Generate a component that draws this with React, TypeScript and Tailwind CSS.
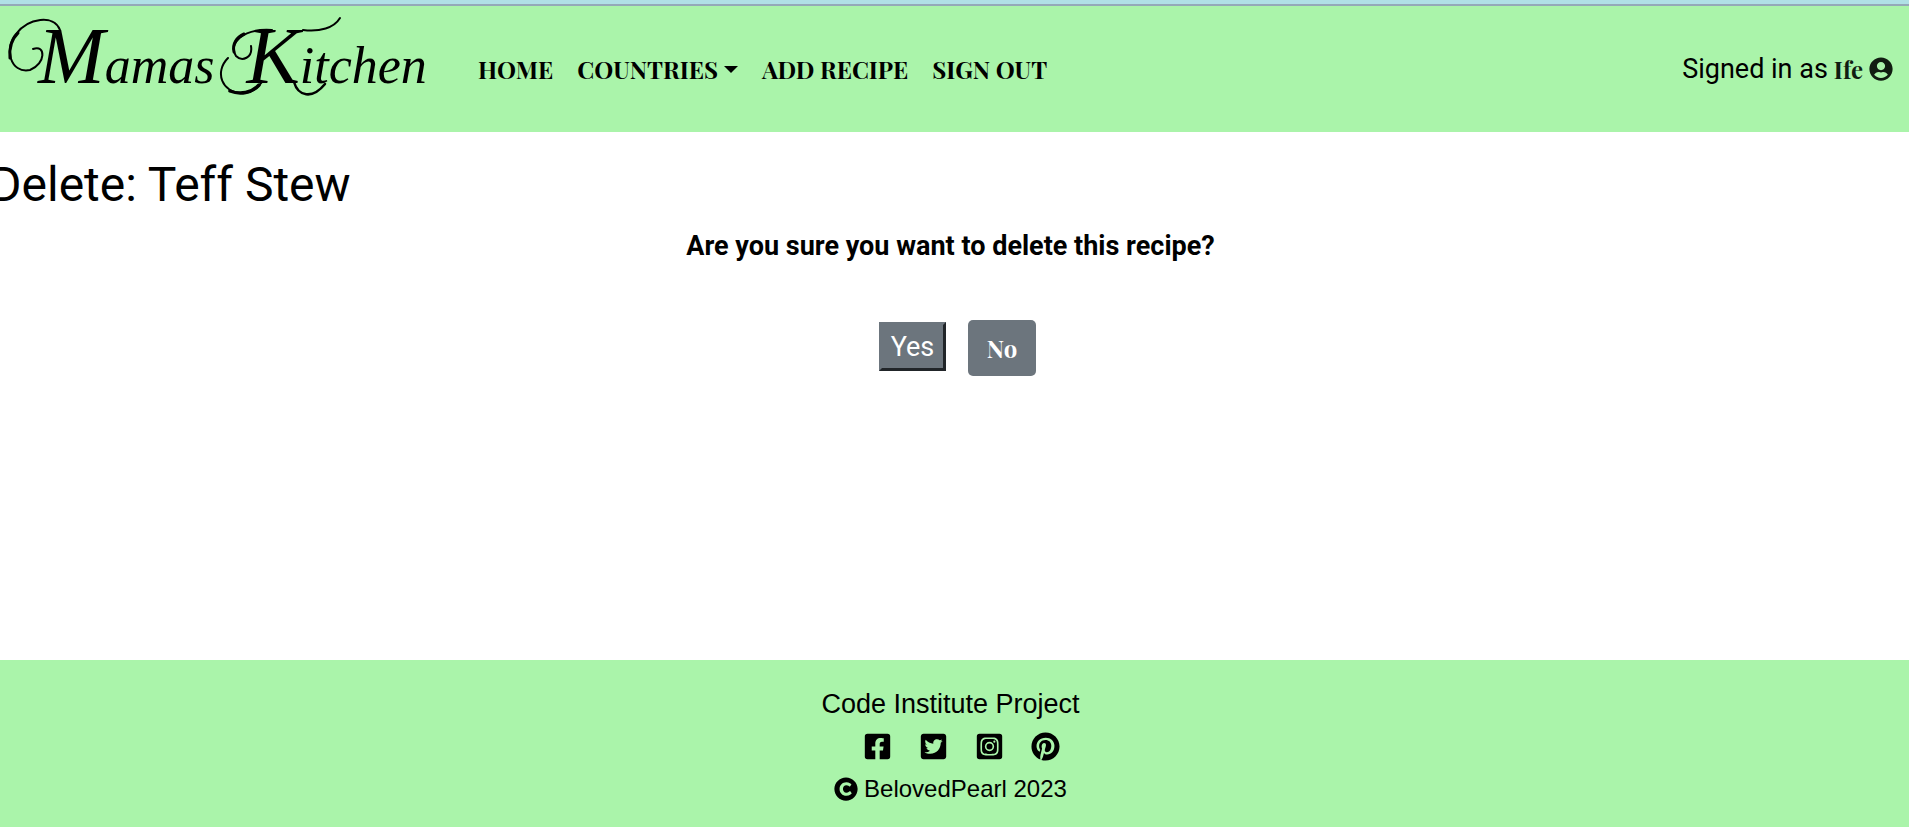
import {
  FaCopyright,
  FaFacebookSquare,
  FaInstagramSquare,
  FaPinterest,
  FaTwitterSquare,
  FaUserCircle,
} from "react-icons/fa";

const display = "font-['Playfair_Display','Liberation_Serif',serif] font-bold text-2xl";

const socials = [
  { label: "Facebook", Icon: FaFacebookSquare },
  { label: "Twitter", Icon: FaTwitterSquare },
  { label: "Instagram", Icon: FaInstagramSquare },
  { label: "Pinterest", Icon: FaPinterest },
];

function Brand() {
  return (
    <a
      href="#home"
      className="relative block w-[432px] pl-[38px] font-['Liberation_Serif',serif] text-[52px] leading-[100px] whitespace-nowrap italic"
    >
      <span className="text-[80px]">M</span>amas
      <span className="ml-8 text-[80px]">K</span>itchen
      {/* Ornamental swashes around the two capitals */}
      <svg
        viewBox="0 0 432 100"
        className="pointer-events-none absolute top-0 left-0 h-[100px] w-[432px]"
        fill="none"
        stroke="black"
        strokeLinecap="round"
        aria-hidden="true"
      >
        <path strokeWidth="2" d="M33 43C46 38 46 58 30 64C10 68 4 42 16 28C28 12 54 8 60 24" />
        <path strokeWidth="3" d="M10 52C9 42 11 34 18 27" />
        <path strokeWidth="2" d="M228 52C214 66 222 87 242 87C252 87 258 82 262 76" />
        <path strokeWidth="3.5" d="M230 85C240 89 252 87 259 79" />
        <path strokeWidth="2" d="M251 40C253 52 242 56 236 50C228 38 242 22 272 24" />
        <path strokeWidth="3" d="M234 46C232 38 237 31 244 28" />
        <path strokeWidth="2" d="M303 24C320 26 334 22 340 12" />
        <path strokeWidth="2.5" d="M294 76C298 90 312 94 325 78" />
      </svg>
    </a>
  );
}

function Header() {
  return (
    <header className="flex h-32 items-start justify-between border-t-2 border-[#94a9b8] bg-[#aaf4aa] pr-4">
      <div className="flex items-start">
        <Brand />
        <nav className={`ml-[46px] flex gap-6 pt-[47px] leading-8 ${display}`}>
          <a href="#home">HOME</a>
          <button type="button" className="flex items-center gap-1.5">
            COUNTRIES
            <span className="border-x-7 border-t-7 border-x-transparent border-t-black" />
          </button>
          <a href="#add">ADD RECIPE</a>
          <a href="#signout">SIGN OUT</a>
        </nav>
      </div>
      <div className="flex items-center gap-1.5 pt-[47px] leading-8">
        <span className="text-[27px]">Signed in as</span>
        <a href="#profile" className={`flex items-center gap-1.5 text-[#111d11] ${display}`}>
          Ife
          <FaUserCircle />
        </a>
      </div>
    </header>
  );
}

export default function App() {
  return (
    <div className="flex min-h-screen flex-col overflow-x-hidden bg-white font-['Roboto',sans-serif] text-black">
      <div className="h-1 bg-[#b0e0e6]" />
      <Header />
      <main className="flex-1">
        <h1 className="-ml-2.5 pt-[25px] text-5xl leading-14">Delete: Teff Stew</h1>
        <p className="mt-[13px] pr-2 text-center text-[27px] leading-10 font-bold">
          Are you sure you want to delete this recipe?
        </p>
        <div className="mt-[54px] flex items-start justify-center gap-[22px] pl-1.5">
          <button
            type="button"
            className="mt-0.5 h-[49px] w-[67px] border-3 border-t-[#6c757d] border-r-[#212529] border-b-[#212529] border-l-[#6c757d] bg-[#6c757d] text-[27px] leading-10 text-white"
          >
            Yes
          </button>
          <a
            href="#recipe"
            className={`flex h-14 w-[68px] items-center justify-center rounded-[5px] bg-[#6c757d] text-white ${display}`}
          >
            No
          </a>
        </div>
      </main>
      <footer className="flex flex-col items-center bg-[#aaf4aa] pt-6 pr-2 pb-[18px] font-['Liberation_Sans',sans-serif]">
        <p className="text-[27px] leading-10">Code Institute Project</p>
        <div className="flex h-11 items-center gap-[27px] pl-[22px] text-[29px]">
          {socials.map(({ label, Icon }) => (
            <a key={label} href="#social" aria-label={label}>
              <Icon />
            </a>
          ))}
        </div>
        <p className="mt-px flex items-center gap-1.5 text-2xl leading-10">
          <FaCopyright />
          BelovedPearl 2023
        </p>
      </footer>
    </div>
  );
}
